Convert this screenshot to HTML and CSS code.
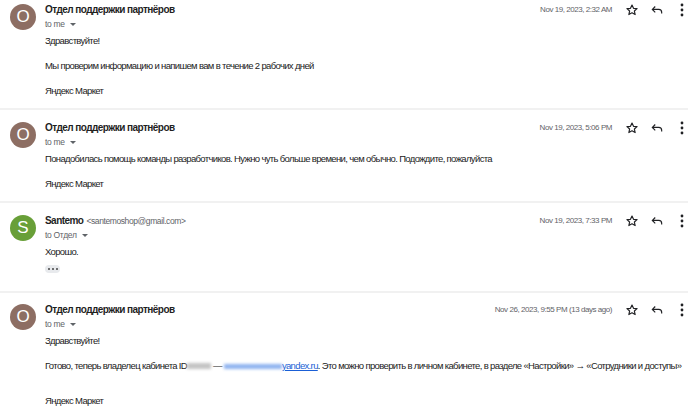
FILE: index.html
```html
<!DOCTYPE html>
<html lang="ru">
<head>
  <meta charset="UTF-8">
  <title>Отдел поддержки партнёров</title>
  <link rel="stylesheet" href="styles.css">
</head>
<body>
  <div class="thread">

    <div class="msg first">
      <div class="avatar brown">О</div>
      <div class="msg-main">
        <div class="head">
          <span class="name">Отдел поддержки партнёров</span>
          <span class="date">Nov 19, 2023, 2:32 AM</span>
          <span class="actions">
            <span class="icon"><svg width="14" height="14" viewBox="0 0 24 24"><path d="M12 3.5l2.6 5.6 6.1.6-4.6 4.1 1.3 6-5.4-3.1-5.4 3.1 1.3-6-4.6-4.1 6.1-.6z" fill="none" stroke="#202124" stroke-width="2" stroke-linejoin="round"/></svg></span>
            <span class="icon"><svg width="14" height="14" viewBox="0 0 24 24"><path d="M9 6L4 11l5 5M4.5 11H15a5 5 0 0 1 5 5v2" fill="none" stroke="#202124" stroke-width="2"/></svg></span>
            <span class="icon"><svg width="4" height="14" viewBox="0 0 4 14"><circle cx="2" cy="2" r="1.4" fill="#202124"/><circle cx="2" cy="7" r="1.4" fill="#202124"/><circle cx="2" cy="12" r="1.4" fill="#202124"/></svg></span>
          </span>
        </div>
        <div class="to">to me <span class="caret"></span></div>
        <div class="body">
          <p>Здравствуйте!</p>
          <p>Мы проверим информацию и напишем вам в течение 2 рабочих дней</p>
          <p>Яндекс Маркет</p>
        </div>
      </div>
    </div>

    <div class="msg">
      <div class="avatar brown">О</div>
      <div class="msg-main">
        <div class="head">
          <span class="name">Отдел поддержки партнёров</span>
          <span class="date">Nov 19, 2023, 5:06 PM</span>
          <span class="actions">
            <span class="icon"><svg width="14" height="14" viewBox="0 0 24 24"><path d="M12 3.5l2.6 5.6 6.1.6-4.6 4.1 1.3 6-5.4-3.1-5.4 3.1 1.3-6-4.6-4.1 6.1-.6z" fill="none" stroke="#202124" stroke-width="2" stroke-linejoin="round"/></svg></span>
            <span class="icon"><svg width="14" height="14" viewBox="0 0 24 24"><path d="M9 6L4 11l5 5M4.5 11H15a5 5 0 0 1 5 5v2" fill="none" stroke="#202124" stroke-width="2"/></svg></span>
            <span class="icon"><svg width="4" height="14" viewBox="0 0 4 14"><circle cx="2" cy="2" r="1.4" fill="#202124"/><circle cx="2" cy="7" r="1.4" fill="#202124"/><circle cx="2" cy="12" r="1.4" fill="#202124"/></svg></span>
          </span>
        </div>
        <div class="to">to me <span class="caret"></span></div>
        <div class="body">
          <p>Понадобилась помощь команды разработчиков. Нужно чуть больше времени, чем обычно. Подождите, пожалуйста</p>
          <p>Яндекс Маркет</p>
        </div>
      </div>
    </div>

    <div class="msg short">
      <div class="avatar green">S</div>
      <div class="msg-main">
        <div class="head">
          <span class="name">Santemo</span>
          <span class="email">&lt;santemoshop@gmail.com&gt;</span>
          <span class="date">Nov 19, 2023, 7:33 PM</span>
          <span class="actions">
            <span class="icon"><svg width="14" height="14" viewBox="0 0 24 24"><path d="M12 3.5l2.6 5.6 6.1.6-4.6 4.1 1.3 6-5.4-3.1-5.4 3.1 1.3-6-4.6-4.1 6.1-.6z" fill="none" stroke="#202124" stroke-width="2" stroke-linejoin="round"/></svg></span>
            <span class="icon"><svg width="14" height="14" viewBox="0 0 24 24"><path d="M9 6L4 11l5 5M4.5 11H15a5 5 0 0 1 5 5v2" fill="none" stroke="#202124" stroke-width="2"/></svg></span>
            <span class="icon"><svg width="4" height="14" viewBox="0 0 4 14"><circle cx="2" cy="2" r="1.4" fill="#202124"/><circle cx="2" cy="7" r="1.4" fill="#202124"/><circle cx="2" cy="12" r="1.4" fill="#202124"/></svg></span>
          </span>
        </div>
        <div class="to">to Отдел <span class="caret"></span></div>
        <div class="body">
          <p class="reply">Хорошо.</p>
          <span class="more-btn"><i></i><i></i><i></i></span>
        </div>
      </div>
    </div>

    <div class="msg last">
      <div class="avatar brown">О</div>
      <div class="msg-main">
        <div class="head">
          <span class="name">Отдел поддержки партнёров</span>
          <span class="date">Nov 26, 2023, 9:55 PM (13 days ago)</span>
          <span class="actions">
            <span class="icon"><svg width="14" height="14" viewBox="0 0 24 24"><path d="M12 3.5l2.6 5.6 6.1.6-4.6 4.1 1.3 6-5.4-3.1-5.4 3.1 1.3-6-4.6-4.1 6.1-.6z" fill="none" stroke="#202124" stroke-width="2" stroke-linejoin="round"/></svg></span>
            <span class="icon"><svg width="14" height="14" viewBox="0 0 24 24"><path d="M9 6L4 11l5 5M4.5 11H15a5 5 0 0 1 5 5v2" fill="none" stroke="#202124" stroke-width="2"/></svg></span>
            <span class="icon"><svg width="4" height="14" viewBox="0 0 4 14"><circle cx="2" cy="2" r="1.4" fill="#202124"/><circle cx="2" cy="7" r="1.4" fill="#202124"/><circle cx="2" cy="12" r="1.4" fill="#202124"/></svg></span>
          </span>
        </div>
        <div class="to">to me <span class="caret"></span></div>
        <div class="body">
          <p>Здравствуйте!</p>
          <p class="nowrap">Готово, теперь владелец кабинета ID<span class="blur-id"></span> — <a href="#"><span class="blur-mail"></span>yandex.ru</a>. Это можно проверить в личном кабинете, в разделе «Настройки» → «Сотрудники и доступы»</p>
          <p class="gap">Яндекс Маркет</p>
        </div>
      </div>
    </div>

  </div>
</body>
</html>
```

FILE: styles.css
```css
body {
  margin: 0;
  background: #fff;
  font-family: "Liberation Sans", Arial, sans-serif;
  color: #222;
  overflow: hidden;
}

.thread {
  width: 688px;
}

.msg {
  display: flex;
  padding: 11px 0 10px 10px;
  border-bottom: 2px solid #f1f1f1;
}

.msg.first { padding-top: 3px; }
.msg.short { padding-bottom: 18px; }
.msg.last { border-bottom: none; padding-top: 10px; }

.avatar {
  width: 26px;
  height: 26px;
  border-radius: 50%;
  flex: none;
  color: #fff;
  font-size: 17px;
  line-height: 26px;
  text-align: center;
  margin-top: 1px;
}

.brown { background: #8d6e63; }
.green { background: #689f38; }

.msg-main {
  flex: 1;
  min-width: 0;
  margin-left: 9px;
}

.head {
  display: flex;
  align-items: center;
  height: 13px;
}

.name {
  font-weight: bold;
  font-size: 10px;
  letter-spacing: -0.55px;
  color: #1f1f1f;
}

.email {
  font-size: 8.5px;
  letter-spacing: -0.4px;
  color: #5f6368;
  margin-left: 3px;
}

.date {
  margin-left: auto;
  font-size: 8px;
  letter-spacing: -0.45px;
  color: #5f6368;
}

.actions {
  display: flex;
  margin-right: -6px;
  margin-left: 7px;
}

.icon {
  width: 25px;
  height: 14px;
  display: flex;
  align-items: center;
  justify-content: center;
}

.to {
  margin-top: 2px;
  font-size: 8.5px;
  letter-spacing: -0.3px;
  color: #5f6368;
  line-height: 13px;
}

.caret {
  display: inline-block;
  margin-left: 3px;
  vertical-align: middle;
  border-left: 3px solid transparent;
  border-right: 3px solid transparent;
  border-top: 3px solid #5f6368;
}

.body {
  margin-top: 3px;
  font-size: 9.5px;
  letter-spacing: -0.65px;
}

.body p {
  margin: 0 0 11px;
  line-height: 14px;
}

.body p:last-child { margin-bottom: 0; }

.body p.reply { margin-bottom: 2px; }
.body p.gap { margin-top: 21px; }

.nowrap {
  white-space: nowrap;
}

.more-btn {
  display: inline-flex;
  align-items: center;
  justify-content: center;
  gap: 2px;
  width: 15px;
  height: 8px;
  background: #e8eaed;
  border-radius: 4px;
}

.more-btn i {
  width: 2px;
  height: 2px;
  border-radius: 50%;
  background: #444;
}

a {
  color: #1a5fd6;
}

.blur-id {
  display: inline-block;
  width: 24px;
  height: 6px;
  background: #c4c4c4;
  filter: blur(1.5px);
  vertical-align: middle;
}

.blur-mail {
  display: inline-block;
  width: 58px;
  height: 5px;
  background: #8fb3f0;
  filter: blur(1.5px);
  vertical-align: middle;
}
```
